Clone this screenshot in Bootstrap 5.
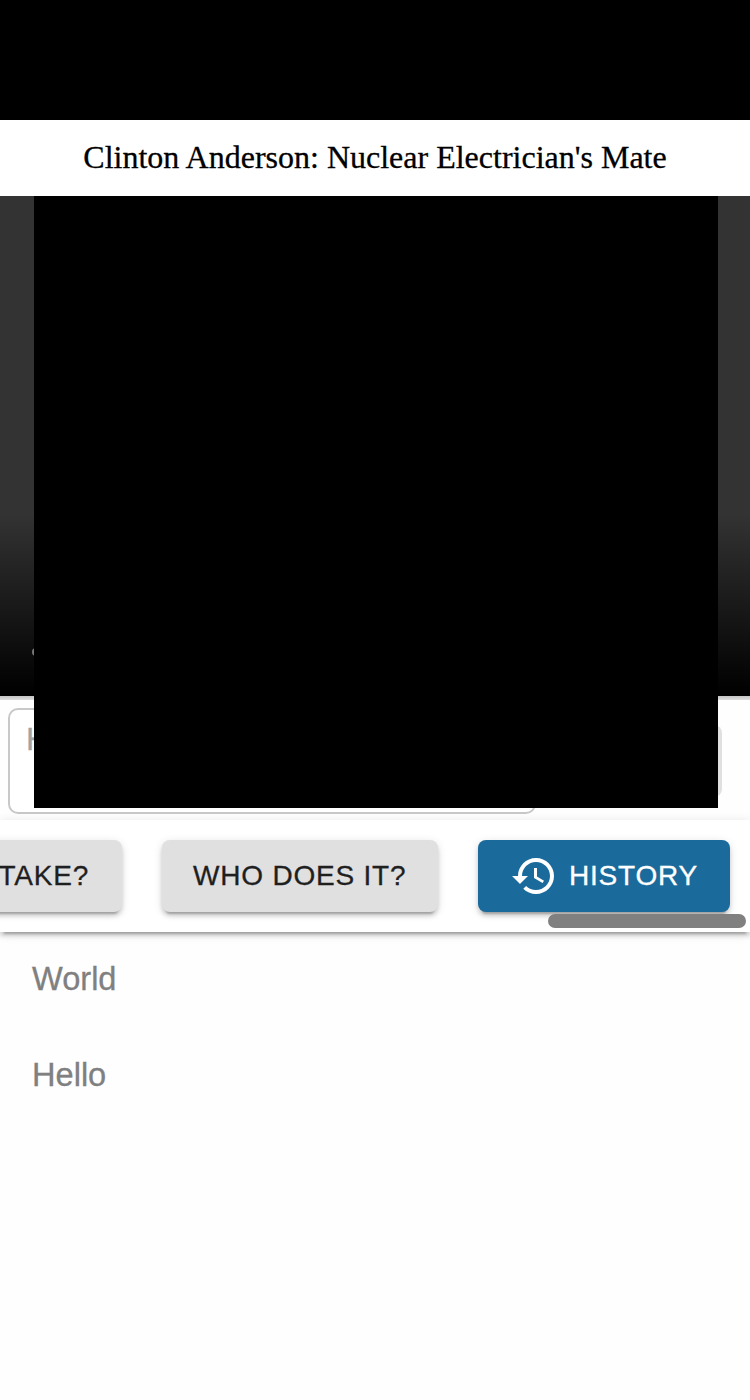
<!DOCTYPE html>
<html lang="en">
<head>
<meta charset="utf-8">
<meta name="viewport" content="width=device-width, initial-scale=1">
<title>Clinton Anderson</title>
<link href="https://cdn.jsdelivr.net/npm/bootstrap@5.3.0/dist/css/bootstrap.min.css" rel="stylesheet">
<style>
body{font-family:"Liberation Sans",Arial,sans-serif;background:#fefefe;min-height:1400px;-webkit-text-stroke:.3px currentColor}
.status-bar{height:120px}
.title-bar{height:76px;font:32px/74px "Liberation Serif","Times New Roman",serif;color:#000}
.raised{box-shadow:0 6px 2px -4px rgba(0,0,0,.2),0 4px 4px 0 rgba(0,0,0,.14),0 2px 10px 0 rgba(0,0,0,.12)}
.video{height:500px;background:linear-gradient(#333 0,#333 318px,#1c1c1c 400px,#080808 470px,#000 500px)}
.overlay{left:34px;top:0;width:684px;height:612px;z-index:5}
.play-dot{left:32px;top:452px;width:8px;height:8px;background:#777}
.strip{height:4px;background:linear-gradient(#c4c4c4,#dedede)}
.composer{height:120px;padding:8px 28px 6px 8px;background:#fefefe}
.field{width:528px;height:106px;border:2px solid #c8c8c8;border-radius:10px;padding:11px 16px;font-size:32px;line-height:36px;color:#a3a3a3;background:#fff}
.send{width:100px;height:72px;background:#e0e0e0;border-radius:8px}
.chips{height:112px;padding:20px;background:#fff;z-index:2}
.chip-row{gap:40px}
.chip{height:72px;border:0;border-radius:8px;padding:0 33px 0 31px;background:#e0e0e0;color:#1f1f1f;font-size:28px;letter-spacing:.8px;line-height:72px;flex:none;white-space:nowrap}
.chip-who{width:276px}
.chip-main{width:252px;background:#1a6b9c;color:#fff;padding:0 20px 0 32px}
.chip-icon{margin-right:11px}
.scroll-thumb{right:4px;bottom:4px;width:198px;height:14px;background:#808080}
.msgs{padding:23px 32px;gap:48px;font-size:32.6px;line-height:48px;color:#808080}
</style>
</head>
<body class="overflow-hidden">
<div class="status-bar bg-black"></div>
<header class="title-bar text-center bg-white position-relative z-1">Clinton Anderson: Nuclear Electrician's Mate</header>
<main>
  <div class="position-relative">
    <div class="overlay position-absolute bg-black"></div>
    <div class="video position-relative"><i class="play-dot position-absolute rounded-circle"></i></div>
    <div class="strip"></div>
    <div class="composer d-flex align-items-center justify-content-between">
      <div class="field">H</div>
      <div class="send"></div>
    </div>
  </div>
  <nav class="chips raised position-relative">
    <div class="chip-row d-flex justify-content-end">
      <button class="chip raised">TAKE?</button>
      <button class="chip chip-who raised">WHO DOES IT?</button>
      <button class="chip chip-main raised d-flex align-items-center">
        <svg class="chip-icon flex-shrink-0" width="48" height="48" viewBox="0 0 24 24" fill="currentColor" stroke="none"><path d="M13 3c-4.97 0-9 4.03-9 9H1l3.89 3.89.07.14L9 12H6c0-3.87 3.13-7 7-7s7 3.13 7 7-3.13 7-7 7c-1.93 0-3.68-.79-4.94-2.06l-1.42 1.42C8.27 19.99 10.51 21 13 21c4.97 0 9-4.03 9-9s-4.03-9-9-9zm-1 5v5l4.28 2.54.72-1.21-3.5-2.08V8H12z"/></svg><span>HISTORY</span>
      </button>
    </div>
    <div class="scroll-thumb position-absolute rounded-pill"></div>
  </nav>
  <div class="msgs d-flex flex-column"><div>World</div><div>Hello</div></div>
</main>
<script src="https://cdn.jsdelivr.net/npm/bootstrap@5.3.0/dist/js/bootstrap.bundle.min.js"></script>
</body>
</html>
